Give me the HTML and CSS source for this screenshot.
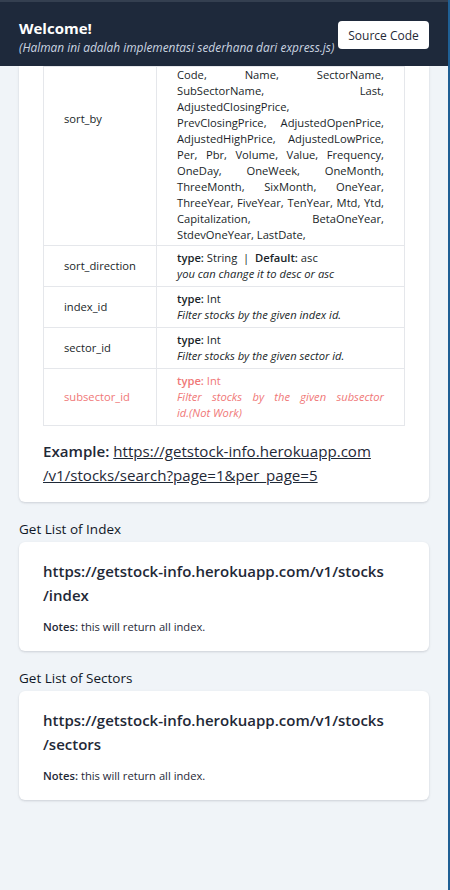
FILE: index.html
```html
<!DOCTYPE html>
<html lang="id">
<head>
<meta charset="utf-8">
<title>Welcome!</title>
<link rel="stylesheet" href="styles.css">
</head>
<body>
<div class="page">
  <header class="topbar">
    <div class="intro">
      <h1 class="intro-title">Welcome!</h1>
      <p class="intro-sub">(Halman ini adalah implementasi sederhana dari express.js)</p>
    </div>
    <a class="btn" href="#">Source Code</a>
  </header>

  <main class="content">
    <section class="card card-cut">
      <table class="params">
        <tr>
          <td class="param param-top">sort_by</td>
          <td class="desc desc-top">
            <span class="jl">Code, Name, SectorName,</span>
            <span class="jl">SubSectorName, Last,</span>
            <span class="jl">AdjustedClosingPrice,</span>
            <span class="jl">PrevClosingPrice, AdjustedOpenPrice,</span>
            <span class="jl">AdjustedHighPrice, AdjustedLowPrice,</span>
            <span class="jl">Per, Pbr, Volume, Value, Frequency,</span>
            <span class="jl">OneDay, OneWeek, OneMonth,</span>
            <span class="jl">ThreeMonth, SixMonth, OneYear,</span>
            <span class="jl">ThreeYear, FiveYear, TenYear, Mtd, Ytd,</span>
            <span class="jl">Capitalization, BetaOneYear,</span>
            <span class="ll">StdevOneYear, LastDate,</span>
          </td>
        </tr>
        <tr>
          <td class="param">sort_direction</td>
          <td class="desc">
            <span class="ll"><b>type:</b> String &nbsp;|&nbsp; <b>Default:</b> asc</span>
            <em class="ll">you can change it to desc or asc</em>
          </td>
        </tr>
        <tr>
          <td class="param">index_id</td>
          <td class="desc">
            <span class="ll"><b>type:</b> Int</span>
            <em class="ll">Filter stocks by the given index id.</em>
          </td>
        </tr>
        <tr>
          <td class="param">sector_id</td>
          <td class="desc">
            <span class="ll"><b>type:</b> Int</span>
            <em class="ll">Filter stocks by the given sector id.</em>
          </td>
        </tr>
        <tr class="row-off">
          <td class="param">subsector_id</td>
          <td class="desc">
            <span class="ll"><b>type:</b> Int</span>
            <em class="jl">Filter stocks by the given subsector</em>
            <em class="ll">id.(Not Work)</em>
          </td>
        </tr>
      </table>
      <p class="example"><b>Example:</b> <a href="#">https://getstock-info.herokuapp.com<br>/v1/stocks/search?page=1&amp;per_page=5</a></p>
    </section>

    <h2 class="section-title">Get List of Index</h2>
    <section class="card">
      <h3 class="endpoint">https://getstock-info.herokuapp.com/v1/stocks<br>/index</h3>
      <p class="notes"><b>Notes:</b> this will return all index.</p>
    </section>

    <h2 class="section-title">Get List of Sectors</h2>
    <section class="card">
      <h3 class="endpoint">https://getstock-info.herokuapp.com/v1/stocks<br>/sectors</h3>
      <p class="notes"><b>Notes:</b> this will return all index.</p>
    </section>
  </main>
</div>
</body>
</html>
```

FILE: styles.css
```css
* { box-sizing: border-box; }

html, body {
  margin: 0;
  padding: 0;
}

body {
  background: #f0f4f8;
  font-family: "Open Sans", "Noto Sans", sans-serif;
  color: #1f2937;
}

.page {
  min-height: 100vh;
  border-right: 2px solid #1f5f94;
}

/* header */
.topbar {
  display: flex;
  align-items: center;
  justify-content: space-between;
  background: #1e293b;
  border-top: 2px solid #343f50;
  padding: 16px 19px 10px 19px;
  height: 66px;
}

.intro-title {
  margin: 0;
  font-size: 15px;
  line-height: 20px;
  font-weight: 700;
  color: #ffffff;
}

.intro-sub {
  margin: 0;
  font-size: 11.9px;
  line-height: 18px;
  font-style: italic;
  color: #cbd5e1;
}

.btn {
  display: flex;
  align-items: center;
  justify-content: center;
  width: 91px;
  height: 28px;
  margin-top: -4px;
  background: #ffffff;
  border-radius: 4px;
  color: #1f2937;
  font-size: 12px;
  text-decoration: none;
}

/* content */
.content {
  padding: 0 19px 40px 19px;
}

.card {
  background: #ffffff;
  border-radius: 6px;
  box-shadow: 0 1px 3px rgba(15, 23, 42, 0.10), 0 1px 2px rgba(15, 23, 42, 0.06);
  padding: 17px 24px 15px 24px;
}

.card-cut {
  border-radius: 0 0 6px 6px;
  padding: 0 24px 15px 24px;
  margin-bottom: 1px;
}

.params {
  width: 100%;
  border-collapse: collapse;
  font-size: 11.2px;
  line-height: 16px;
  color: #1a1f29;
}

.params td {
  border: 1px solid #e5e7eb;
  padding: 4px 20px;
  vertical-align: middle;
}

.params .param {
  width: 113px;
}

.params .param-top {
  vertical-align: top;
  padding-top: 44px;
}

.params .desc-top {
  padding-top: 0;
  padding-bottom: 2px;
}

.params b {
  font-weight: 600;
}

.jl, .ll {
  display: block;
}

.jl {
  text-align: justify;
  text-align-last: justify;
}

.ll {
  text-align: left;
}

.row-off td {
  color: #f07878;
}

.example {
  margin: 13px 0 0 0;
  font-size: 15.1px;
  line-height: 24px;
}

.example b {
  font-weight: 600;
}

.example a {
  color: #1f2937;
  text-decoration: underline;
}

.section-title {
  margin: 16px 0 2px 0;
  font-size: 13.5px;
  line-height: 22px;
  font-weight: 500;
  color: #111827;
}

.endpoint {
  margin: 0;
  font-size: 15px;
  line-height: 24px;
  font-weight: 600;
  color: #1f2937;
}

.notes {
  margin: 11px 0 0 0;
  font-size: 11.2px;
  line-height: 18px;
}

.notes b {
  font-weight: 600;
}
```
